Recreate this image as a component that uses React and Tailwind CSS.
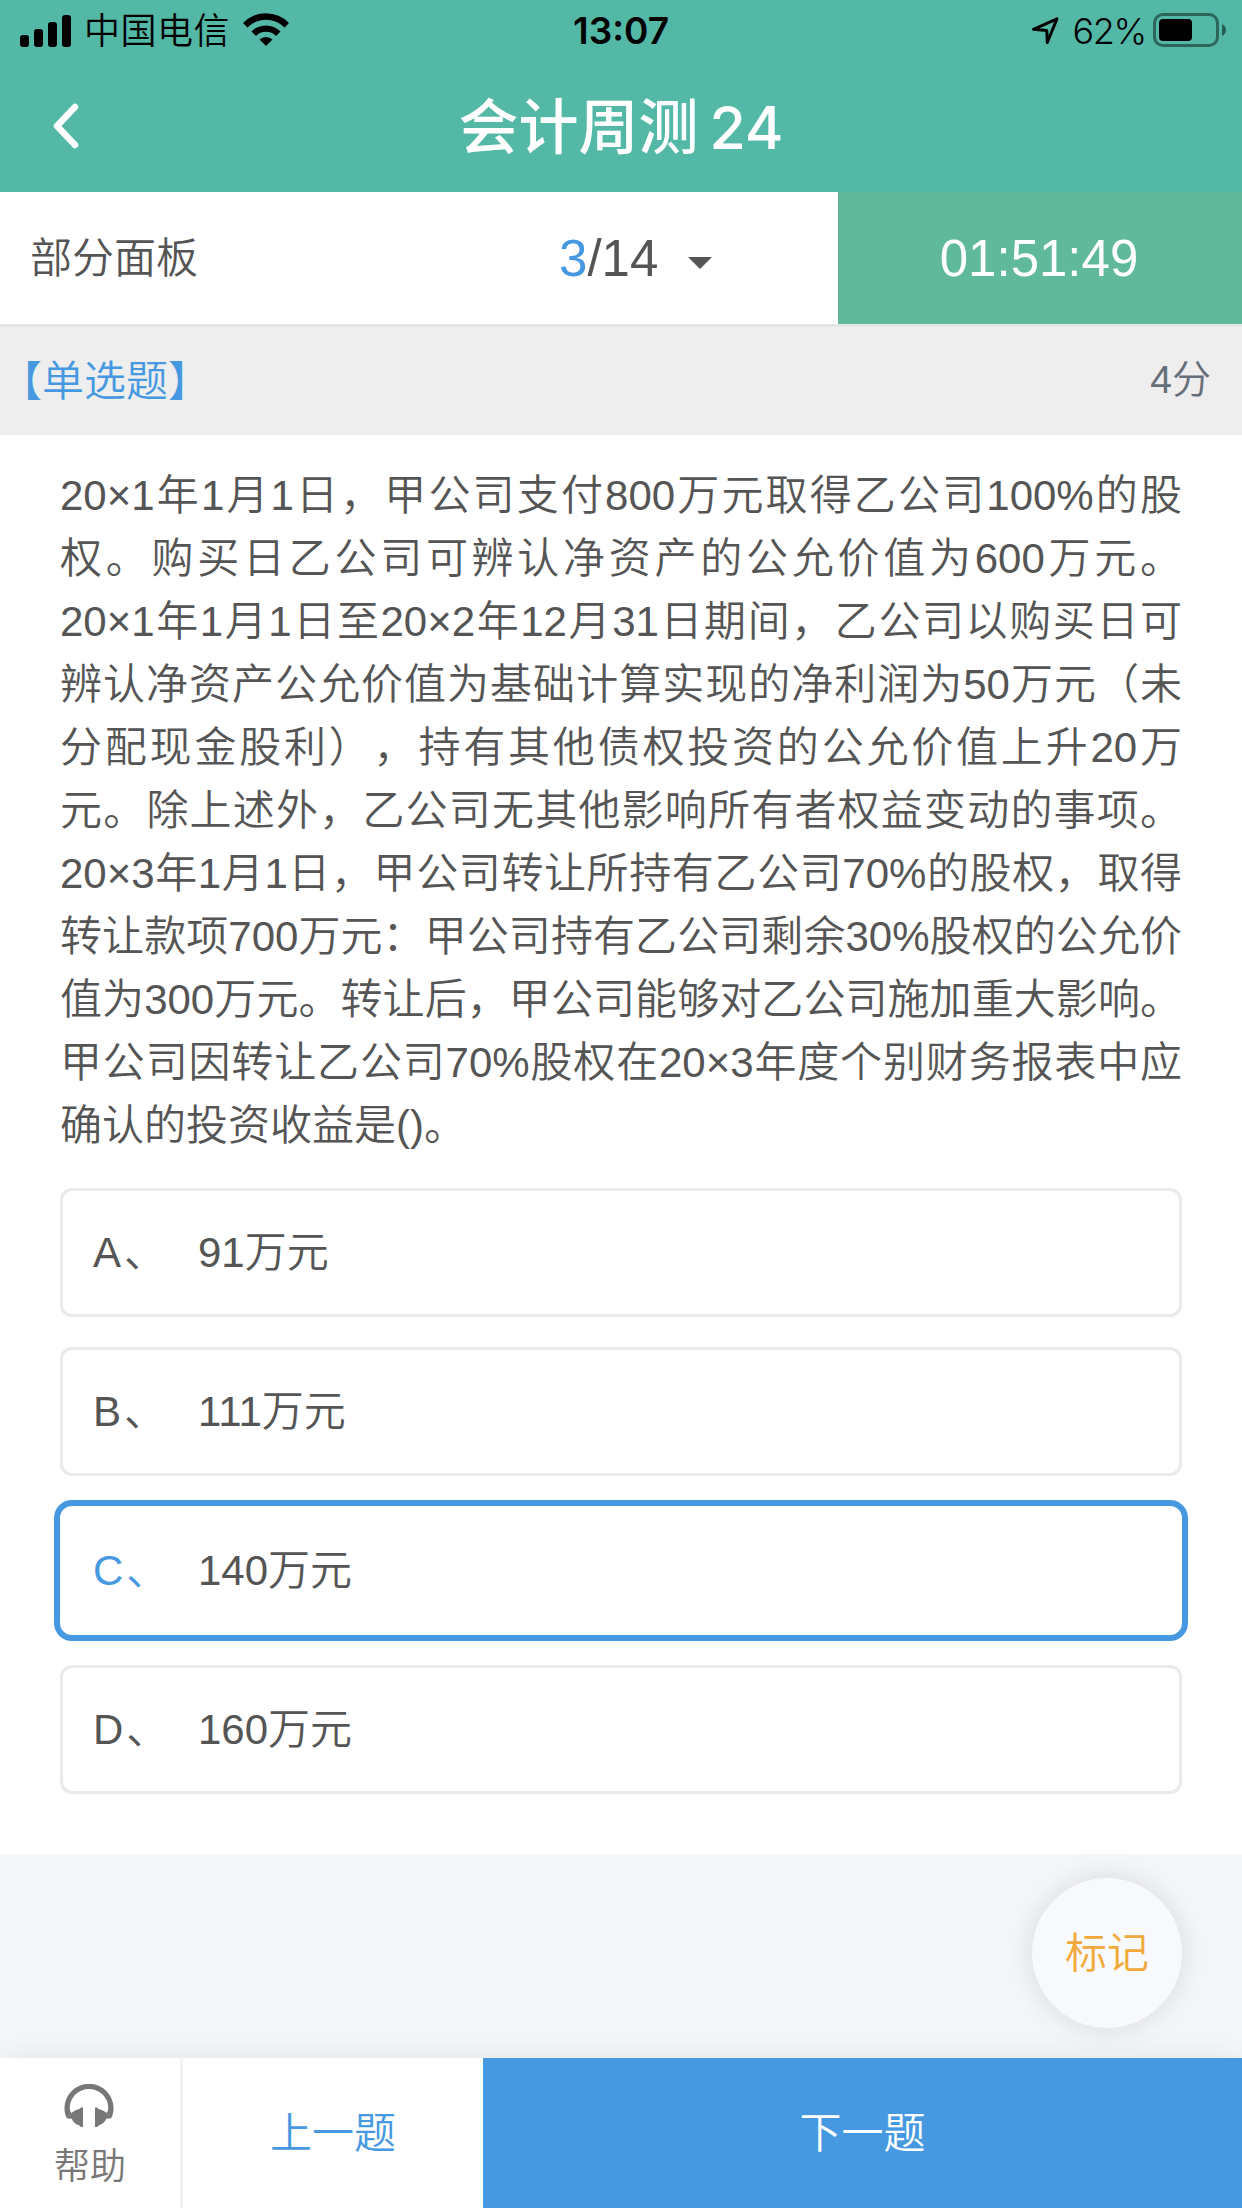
import React, { useState } from "react";

// each entry is one justified row of the question
const questionLines = [
  "20×1年1月1日，甲公司支付800万元取得乙公司100%的股",
  "权。购买日乙公司可辨认净资产的公允价值为600万元。",
  "20×1年1月1日至20×2年12月31日期间，乙公司以购买日可",
  "辨认净资产公允价值为基础计算实现的净利润为50万元（未",
  "分配现金股利），持有其他债权投资的公允价值上升20万",
  "元。除上述外，乙公司无其他影响所有者权益变动的事项。",
  "20×3年1月1日，甲公司转让所持有乙公司70%的股权，取得",
  "转让款项700万元：甲公司持有乙公司剩余30%股权的公允价",
  "值为300万元。转让后，甲公司能够对乙公司施加重大影响。",
  "甲公司因转让乙公司70%股权在20×3年度个别财务报表中应",
  "确认的投资收益是()。",
];

const options = [
  { key: "A", text: "91万元" },
  { key: "B", text: "111万元" },
  { key: "C", text: "140万元" },
  { key: "D", text: "160万元" },
];

const StatusBar = () => {
  return (
    <div className="grid h-[60px] grid-cols-3 items-center font-['Inter','Noto_Sans_CJK_SC',sans-serif] text-[36px] leading-[60px] text-black">
      <div className="flex items-center pl-5">
        <svg className="h-[60px] w-[51px]" viewBox="20 0 51 60">
          <rect x="20" y="34" width="9" height="12" rx="3" />
          <rect x="34" y="28" width="9" height="18" rx="3" />
          <rect x="48" y="21" width="9" height="25" rx="3" />
          <rect x="62" y="14" width="9" height="32" rx="3" />
        </svg>
        <span className="-mt-px ml-[13px] pt-[2px] font-[350] tracking-[0.5px]">中国电信</span>
        <svg className="-mt-0.5 ml-[13px] h-[60px] w-[46px]" viewBox="243 0 46 60">
          <path d="M243 23 A32 32 0 0 1 289 23 L284.500 27.500 A26 26 0 0 0 247.500 27.500 Z" />
          <path d="M251.500 31.500 A20.500 20.500 0 0 1 280.500 31.500 L276 36 A14 14 0 0 0 256 36 Z" />
          <path d="M259.500 39.500 A9.500 9.500 0 0 1 272.500 39.500 L266 46 Z" />
        </svg>
      </div>
      <div className="text-center text-[37px] font-semibold">13:07</div>
      <div className="flex items-center justify-end pr-4">
        <svg className="-mt-0.5 h-[60px] w-[28px]" viewBox="1032 0 28 60">
          <path
            d="M1033.500 29.300 L1057 18.800 L1047.300 42.500 L1046.800 30.500 Z"
            fill="none"
            stroke="#000"
            strokeWidth="3"
            strokeLinejoin="round"
          />
        </svg>
        <span className="ml-3 tracking-[-1.3px]">62%</span>
        <svg className="-mt-0.5 ml-[7px] h-[60px] w-[73px]" viewBox="1153 0 73 60">
          <rect x="1154.500" y="14.500" width="63" height="31" rx="8.500" fill="none" stroke="#000" strokeOpacity="0.45" strokeWidth="3" />
          <rect x="1159" y="19" width="33" height="22" rx="4" />
          <path d="M1222 24 Q1226 26 1226 30 Q1226 34 1222 36 Z" fillOpacity="0.5" />
        </svg>
      </div>
    </div>
  );
};

const Header = () => {
  return (
    <div className="grid h-[132px] grid-cols-[200px_1fr_200px] items-center">
      <button className="pl-[53px]">
        <svg className="h-[46px] w-[26px]" viewBox="0 0 26 46" fill="none" stroke="#fff" strokeWidth="6.500" strokeLinecap="round" strokeLinejoin="round">
          <path d="M22 4 L4 23 L22 42" />
        </svg>
      </button>
      <h1 className="pt-0.5 text-center font-['Inter','Noto_Sans_CJK_SC',sans-serif] text-[60px] font-medium leading-[80px] text-white">
        会计周测<span className="ml-[11px] text-[59px]">24</span>
      </h1>
    </div>
  );
};

const App = () => {
  const [selected, setSelected] = useState("C");

  return (
    <div className="flex h-[2208px] w-[1242px] flex-col overflow-hidden bg-[#f4f6fa] font-['Liberation_Sans','Noto_Sans_CJK_SC',sans-serif] text-[42px] font-[350] text-[#555] [text-spacing-trim:space-all]">
      <div className="h-48 bg-[#54b8a7]">
        <StatusBar />
        <Header />
      </div>

      <div className="flex h-[135px] border-b-[3px] border-[#e5e5e5] bg-white">
        <div className="flex w-[838px] items-center">
          <span className="w-[559px] pl-[30px] pt-px">部分面板</span>
          <span className="pt-[2px] text-[51px]">
            <span className="text-[#4699e1]">3</span>/14
          </span>
          <svg className="ml-[30px] mt-2.5 h-3 w-6" viewBox="0 0 24 12" fill="#555">
            <path d="M0 0 H24 L12 12 Z" />
          </svg>
        </div>
        <div className="flex flex-1 items-center justify-center bg-[#60b99b] pr-[2px] pt-[2px] text-[51px] text-white">01:51:49</div>
      </div>

      <div className="flex h-[108px] items-center justify-between bg-[#eee] pr-[31px]">
        <span className="pt-px text-[#4699e1]">【单选题】</span>
        <span className="pb-[2px] text-[39px] text-[#666e7a]">4分</span>
      </div>

      <div className="h-[1419px] bg-white px-[60px] pt-[29px]">
        <div className="mb-[31px]">
          {questionLines.map((line, i) => (
            <p
              key={i}
              className={
                i === questionLines.length - 1
                  ? "h-[63px] whitespace-nowrap leading-[63px]"
                  : "h-[63px] text-justify leading-[63px] [text-align-last:justify]"
              }
            >
              {line}
            </p>
          ))}
        </div>

        <div className="flex flex-col gap-[30px]">
          {options.map((item) => (
            <div
              key={item.key}
              onClick={() => setSelected(item.key)}
              className={
                selected === item.key
                  ? "-m-1.5 flex h-[141px] items-center rounded-[18px] border-[6px] border-[#4699e1] pb-px pl-[33px]"
                  : "flex h-[129px] items-center rounded-[12px] border-[3px] border-[#eaeaea] pb-px pl-[30px]"
              }
            >
              <span className={selected === item.key ? "w-[105px] tracking-[3px] text-[#4699e1]" : "w-[105px] tracking-[3px]"}>
                {item.key}、
              </span>
              <span>{item.text}</span>
            </div>
          ))}
        </div>
      </div>

      <div className="flex h-[204px] justify-end pr-[60px] pt-6">
        <button className="size-[150px] rounded-full bg-[#f8f9fb] pt-px text-[#f1a93b] shadow-[0_0_30px_rgba(0,0,0,0.12)]">标记</button>
      </div>

      <div className="flex h-[150px] shadow-[0_0_30px_rgba(0,0,0,0.08)]">
        <button className="flex w-[183px] flex-col items-center border-r-[3px] border-[#f3f3f3] bg-white pr-[2px] pt-[26px] text-[36px] leading-[54px] text-[#777]">
          <svg className="h-[44px] w-[50px] shrink-0" viewBox="0 0 50 44" fill="#777">
            <path d="M2.500 34 A24.500 24.500 0 1 1 47.500 34 L42.500 29 Q44.300 27 44.300 24 A19.300 19 0 0 0 5.700 24 Q5.700 27 7.500 29 Z" />
            <path d="M2.500 34 Q5 35 7.500 34.500 Q10 40 15.500 41.500 Q16 43 17.500 43 H19 V23.500 H17.500 Q16 23.500 15.500 25 Q10 26 7 29.500 Z" />
            <path d="M47.500 34 Q45 35 42.500 34.500 Q40 40 34.500 41.500 Q34 43 32.500 43 H31 V23.500 H32.500 Q34 23.500 34.500 25 Q40 26 43 29.500 Z" />
          </svg>
          <span className="ml-[2px] mt-3">帮助</span>
        </button>
        <button className="w-[300px] bg-white pt-px text-[#4699e1]">上一题</button>
        <button className="flex-1 bg-[#4699e1] pt-px text-white">下一题</button>
      </div>
    </div>
  );
};

export default App;
